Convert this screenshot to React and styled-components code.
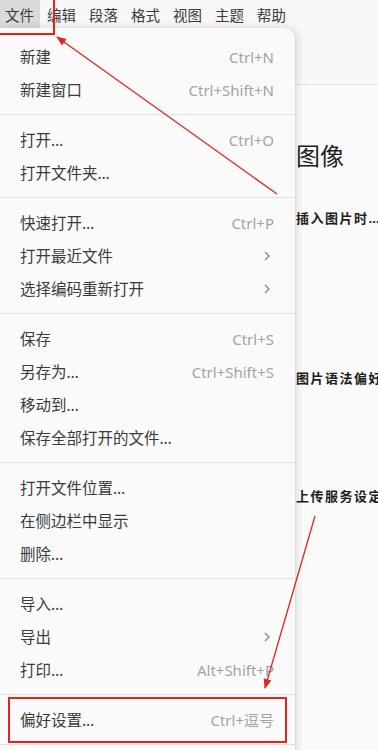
import React from "react";
import styled, { createGlobalStyle } from "styled-components";

const Global = createGlobalStyle`
  html, body { margin: 0; padding: 0; background: #fafafa; }
  body { font-family: "Noto Sans", "Noto Sans CJK SC", sans-serif; overflow: hidden; }
`;

const Page = styled.div`
  position: relative;
  width: 378px;
  height: 750px;
  overflow: hidden;
  background: #fafafa;
`;

const MenuBar = styled.div`
  display: flex;
  height: 28px;
  align-items: stretch;
  background: #f7f7f8;
`;

const MenuBarItem = styled.div`
  display: flex;
  align-items: center;
  padding: 0 6px 0 5px;
  margin-right: 2px;
  font-size: 14.5px;
  color: #3a3a3a;
  font-family: "Noto Sans CJK SC", sans-serif;
  background: ${(p) => (p.$active ? "#dadada" : "transparent")};
`;

const Header = styled.div`
  height: 56px;
  background: #f7f7f9;
  border-bottom: 1px solid #e2e2e4;
`;

const Content = styled.div`
  padding-left: 296px;
  display: flex;
  flex-direction: column;
  white-space: nowrap;
  font-family: "Noto Sans", "Noto Sans CJK SC", sans-serif;
  color: #1e1e1e;
`;

const Heading = styled.div`
  font-size: 24px;
  line-height: 30px;
  margin-top: 56px;
`;

const SubHeading = styled.div`
  font-size: 13px;
  font-weight: 700;
  letter-spacing: 1.5px;
  line-height: 18px;
  margin-top: ${(p) => p.$mt}px;
`;

const Menu = styled.div`
  position: absolute;
  top: 28px;
  left: 0;
  width: 295px;
  padding: 12px 0 0;
  background: #fafafa;
  border-radius: 0 11px 0 0;
  box-shadow: 2px 0 8px rgba(0, 0, 0, 0.12), 1px 0 1px rgba(0, 0, 0, 0.05);
  font-family: "Noto Sans", "Noto Sans CJK SC", sans-serif;
`;

const Item = styled.div`
  display: flex;
  align-items: center;
  justify-content: space-between;
  height: 33px;
  padding: 0 21px 0 20px;
  font-size: 15.5px;
  color: #3a3a3a;
`;

const Shortcut = styled.span`
  font-family: "Noto Sans", "Noto Sans CJK SC", sans-serif;
  font-size: 15px;
  color: #a3a3a3;
`;

const Chevron = styled.span`
  display: flex;
  align-items: center;
  margin-right: 3px;
`;

const Separator = styled.div`
  height: 1px;
  margin: 8px 0;
  background: #e1e1e1;
`;

const Overlay = styled.svg`
  position: absolute;
  top: 0;
  left: 0;
  pointer-events: none;
`;

const groups = [
  [
    ["新建", "Ctrl+N"],
    ["新建窗口", "Ctrl+Shift+N"],
  ],
  [
    ["打开…", "Ctrl+O"],
    ["打开文件夹…"],
  ],
  [
    ["快速打开…", "Ctrl+P"],
    ["打开最近文件", ">"],
    ["选择编码重新打开", ">"],
  ],
  [
    ["保存", "Ctrl+S"],
    ["另存为…", "Ctrl+Shift+S"],
    ["移动到…"],
    ["保存全部打开的文件…"],
  ],
  [
    ["打开文件位置…"],
    ["在侧边栏中显示"],
    ["删除…"],
  ],
  [
    ["导入…"],
    ["导出", ">"],
    ["打印…", "Alt+Shift+P"],
  ],
  [["偏好设置…", "Ctrl+逗号"]],
  [["关闭", "Ctrl+W"]],
];

const ChevronIcon = () => (
  <svg width="8" height="12" viewBox="0 0 8 12">
    <path d="M2 2 L6 6 L2 10" fill="none" stroke="#8a8a8a" strokeWidth="1.4" />
  </svg>
);

export default function App() {
  return (
    <Page>
      <Global />
      <MenuBar>
        {["文件", "编辑", "段落", "格式", "视图", "主题", "帮助"].map((t, i) => (
          <MenuBarItem key={t} $active={i === 0}>
            {t}
          </MenuBarItem>
        ))}
      </MenuBar>
      <Header />
      <Content>
        <Heading>图像</Heading>
        <SubHeading $mt={38}>插入图片时…</SubHeading>
        <SubHeading $mt={142}>图片语法偏好</SubHeading>
        <SubHeading $mt={100}>上传服务设定</SubHeading>
      </Content>
      <Menu>
        {groups.map((g, gi) => (
          <React.Fragment key={gi}>
            {gi > 0 && <Separator />}
            {g.map(([label, sc]) => (
              <Item key={label}>
                <span>{label}</span>
                {sc === ">" ? (
                  <Chevron>
                    <ChevronIcon />
                  </Chevron>
                ) : sc ? (
                  <Shortcut>{sc}</Shortcut>
                ) : null}
              </Item>
            ))}
          </React.Fragment>
        ))}
      </Menu>
      <Overlay width="378" height="750" viewBox="0 0 378 750">
        <defs>
          <marker id="ah" markerWidth="10" markerHeight="10" refX="9" refY="5" orient="auto" markerUnits="userSpaceOnUse">
            <path d="M0 1 L10 5 L0 9 Z" fill="#e0261c" />
          </marker>
        </defs>
        <rect x="-3" y="-3" width="57" height="37" fill="none" stroke="#e0261c" strokeWidth="2" />
        <line x1="277" y1="194" x2="57" y2="37" stroke="#e0261c" strokeWidth="1.3" markerEnd="url(#ah)" />
        <line x1="315" y1="516" x2="265" y2="688" stroke="#e0261c" strokeWidth="1.3" markerEnd="url(#ah)" />
        <rect x="9" y="698" width="277" height="44" fill="none" stroke="#e0261c" strokeWidth="2" />
      </Overlay>
    </Page>
  );
}
